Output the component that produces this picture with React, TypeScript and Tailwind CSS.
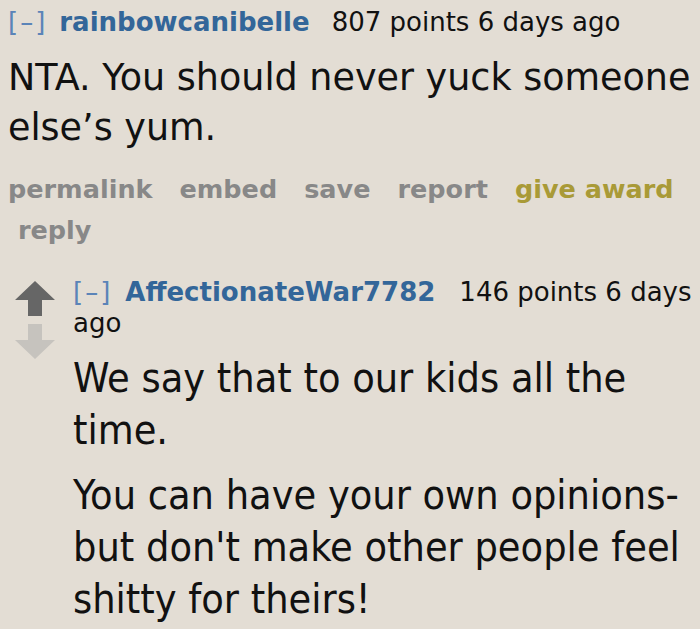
const App = () => {
  return (
    <div className="w-[700px] h-[629px] overflow-hidden bg-[#e3ddd4] font-['DejaVu_Sans',Verdana,sans-serif] text-[#111]">
      {/* parent comment */}
      <div className="pl-2 pt-[6px]">
        <div className="flex items-baseline text-[26px] leading-[32px] whitespace-nowrap">
          <span className="tracking-[2px] text-[#5b84b8]">[–]</span>
          <span className="ml-[12px] font-bold text-[#336699]">rainbowcanibelle</span>
          <span className="ml-[22px]">807 points 6 days ago</span>
        </div>
        <div className="mt-[15px] text-[36.5px] leading-[50px] pr-1">
          NTA. You should never yuck someone else’s yum.
        </div>
        <div className="mt-[16px] text-[25.5px] leading-[41px] font-bold text-[#888888]">
          <div className="flex gap-x-[27px] whitespace-nowrap">
            <span>permalink</span>
            <span>embed</span>
            <span>save</span>
            <span>report</span>
            <span className="text-[#a99a37]">give award</span>
          </div>
          <div className="pl-[10px]">reply</div>
        </div>
      </div>

      {/* child comment */}
      <div className="mt-[26px] flex pl-[15px]">
        <div className="flex w-[40px] shrink-0 flex-col items-center gap-[8px] pt-[4px]">
          <svg width="40" height="35" viewBox="0 0 40 35">
            <path d="M20 0 L40 19 L27 19 L27 35 L13 35 L13 19 L0 19 Z" fill="#666666" />
          </svg>
          <svg width="40" height="35" viewBox="0 0 40 35">
            <path d="M13 0 L27 0 L27 16 L40 16 L20 35 L0 16 L13 16 Z" fill="#c6c3be" />
          </svg>
        </div>
        <div className="ml-[18px] min-w-0 flex-1 pr-1">
          <p className="text-[26px] leading-[31px]">
            <span className="tracking-[2px] text-[#5b84b8]">[–]</span>
            <span className="ml-[13px] font-bold text-[#336699]">AffectionateWar7782</span>
            <span className="ml-[24px]">146 points 6 days</span> <span>ago</span>
          </p>
          <div className="mt-[13px] font-['DejaVu_Sans_Condensed','DejaVu_Sans',sans-serif] [font-stretch:condensed] text-[41px] leading-[52px]">
            <p>We say that to our kids all the time.</p>
            <p className="mt-[13px]">
              You can have your own opinions- but don't make other people feel shitty for theirs!
            </p>
          </div>
        </div>
      </div>
    </div>
  );
};

export default App;
